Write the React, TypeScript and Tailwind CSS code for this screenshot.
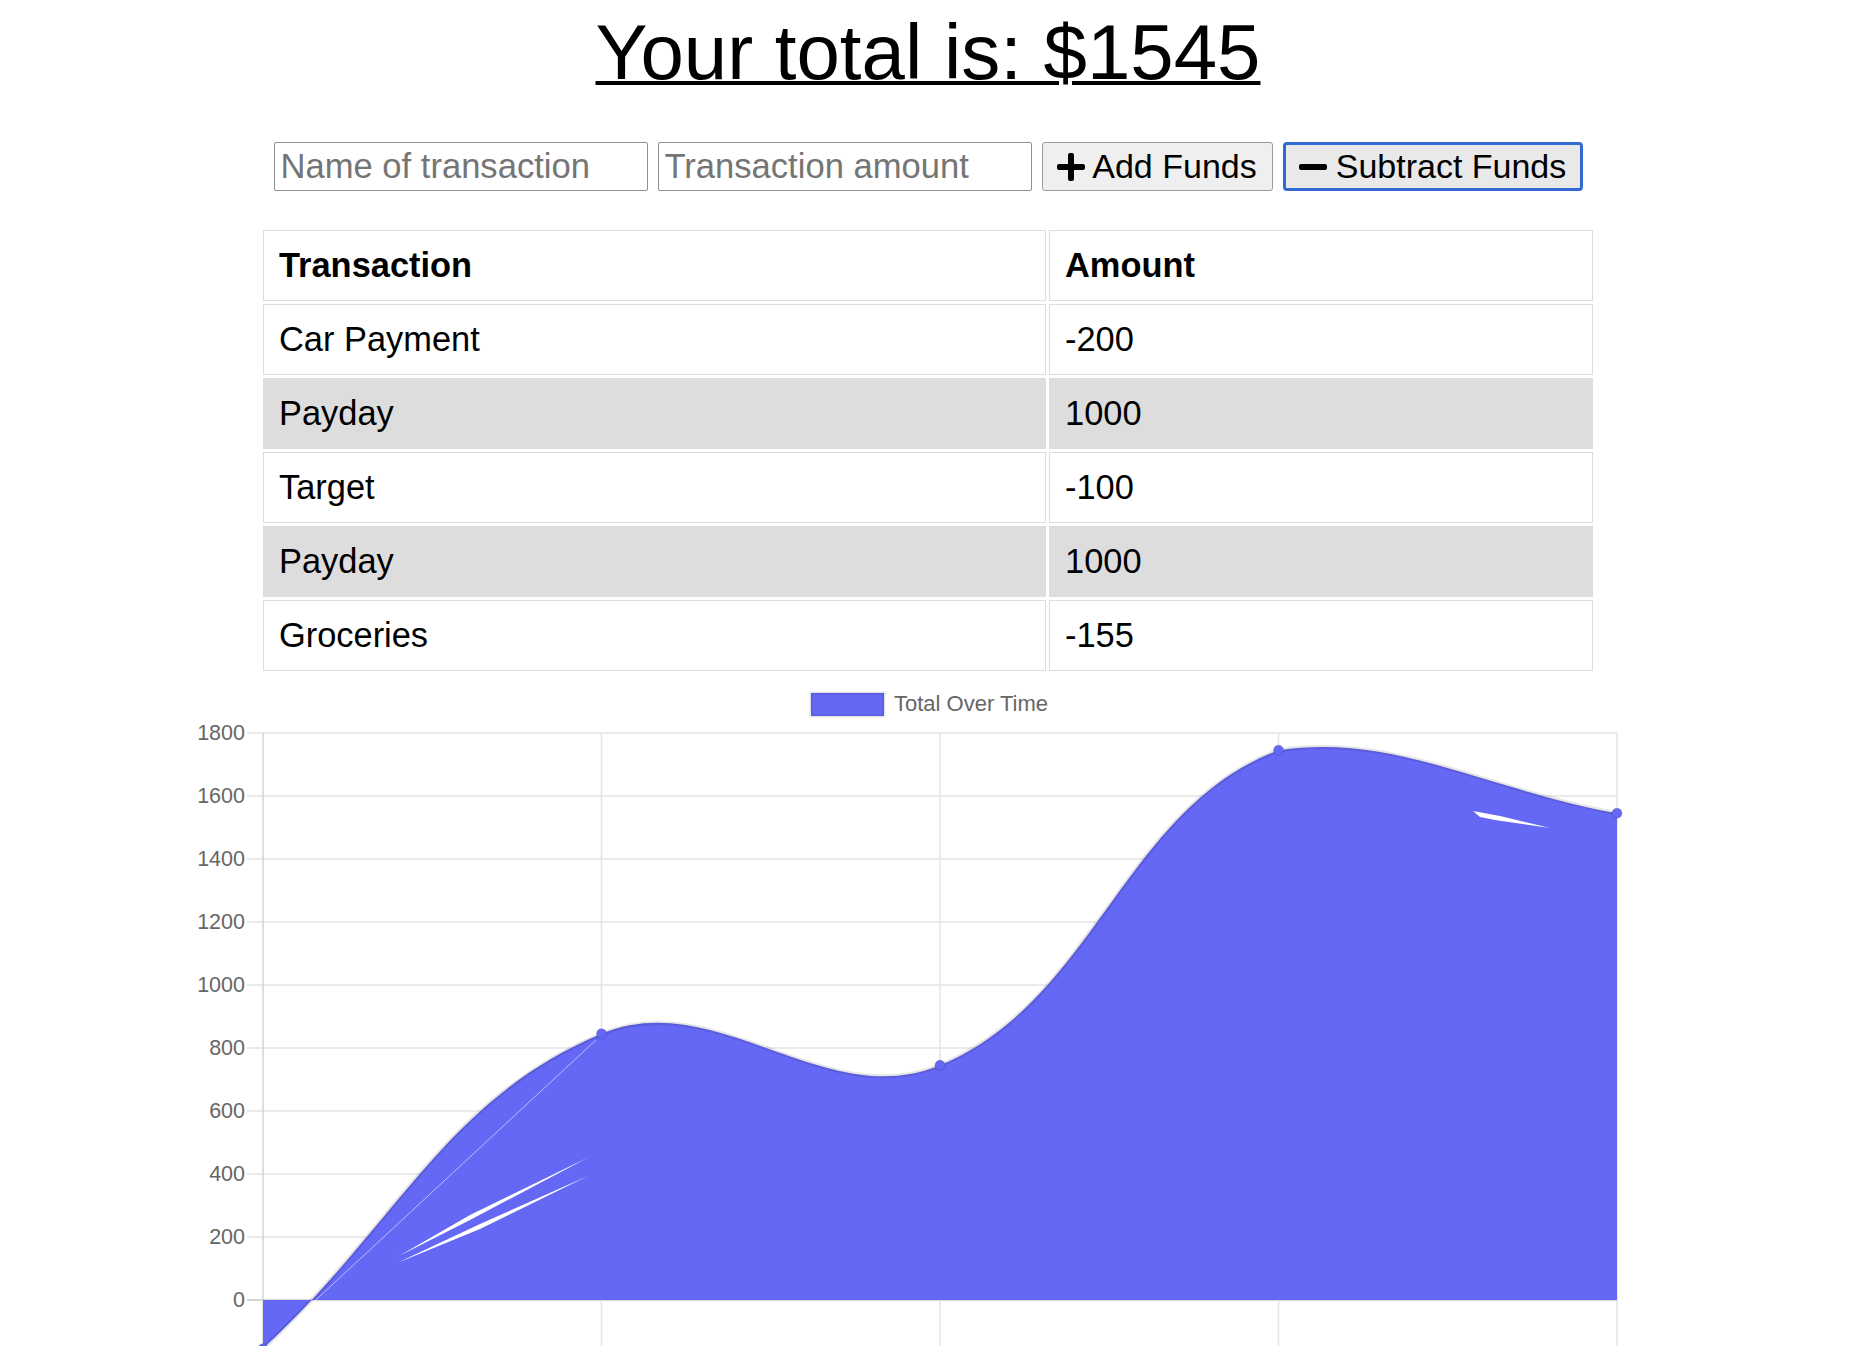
import React from "react";

type Row = { name: string; amount: number };

const rows: Row[] = [
  { name: "Car Payment", amount: -200 },
  { name: "Payday", amount: 1000 },
  { name: "Target", amount: -100 },
  { name: "Payday", amount: 1000 },
  { name: "Groceries", amount: -155 },
];

// chart geometry, in page pixels
const xs = [263, 601.5, 940, 1278.5, 1617];
const data = [-155, 845, 745, 1745, 1545];
const yOf = (v: number) => 1300 - v * 0.315;
const ticks = [0, 200, 400, 600, 800, 1000, 1200, 1400, 1600, 1800];
const fillColor = "#6567f5";

type Pt = { x: number; y: number };

function controlPoints(pts: Pt[], t: number, top: number, bottom: number) {
  const clamp = (y: number) => Math.max(top, Math.min(bottom, y));
  return pts.map((cur, i) => {
    const prev = pts[i - 1] || cur;
    const next = pts[i + 1] || cur;
    const d01 = Math.hypot(cur.x - prev.x, cur.y - prev.y);
    const d12 = Math.hypot(next.x - cur.x, next.y - cur.y);
    const s01 = d01 + d12 ? d01 / (d01 + d12) : 0;
    const s12 = d01 + d12 ? d12 / (d01 + d12) : 0;
    const fa = t * s01;
    const fb = t * s12;
    return {
      before: { x: cur.x - fa * (next.x - prev.x), y: clamp(cur.y - fa * (next.y - prev.y)) },
      after: { x: cur.x + fb * (next.x - prev.x), y: clamp(cur.y + fb * (next.y - prev.y)) },
    };
  });
}

function curvePath() {
  const pts = xs.map((x, i) => ({ x, y: yOf(data[i]) }));
  const cps = controlPoints(pts, 0.4, 733, 1420);
  let d = `M${pts[0].x},${pts[0].y}`;
  for (let i = 1; i < pts.length; i++) {
    const a = cps[i - 1].after;
    const b = cps[i].before;
    d += ` C${a.x},${a.y} ${b.x},${b.y} ${pts[i].x},${pts[i].y}`;
  }
  return d;
}

function PlusIcon() {
  return (
    <svg viewBox="0 0 448 512" className="h-[32px] w-[28px]" fill="currentColor">
      <path d="M416 208H272V64c0-17.67-14.330-32-32-32h-32c-17.67 0-32 14.33-32 32v144H32c-17.67 0-32 14.33-32 32v32c0 17.67 14.33 32 32 32h144v144c0 17.67 14.33 32 32 32h32c17.67 0 32-14.33 32-32V304h144c17.67 0 32-14.33 32-32v-32c0-17.67-14.33-32-32-32z" />
    </svg>
  );
}

function MinusIcon() {
  return (
    <svg viewBox="0 0 448 512" className="h-[32px] w-[28px]" fill="currentColor">
      <path d="M416 208H32c-17.67 0-32 14.33-32 32v32c0 17.67 14.33 32 32 32h384c17.67 0 32-14.33 32-32v-32c0-17.67-14.33-32-32-32z" />
    </svg>
  );
}

function Chart() {
  const line = curvePath();
  const area = `${line} L1617,1300 L263,1300 Z`;
  return (
    <svg width={1856} height={672} viewBox="0 674 1856 672" className="block">
      {/* legend */}
      <rect x={811} y={693} width={73} height={23} fill={fillColor} stroke="rgba(0,0,0,0.1)" strokeWidth={3} />
      <text x={894} y={705} fontSize={22} fill="#666" dominantBaseline="middle" fontFamily="'Liberation Sans', Arial, sans-serif">
        Total Over Time
      </text>

      {/* grid */}
      {ticks.map((v) => (
        <line key={v} x1={247} x2={1617} y1={yOf(v)} y2={yOf(v)} stroke={v === 0 ? "#c9c9c9" : "#e3e3e3"} strokeWidth={1.5} />
      ))}
      {xs.map((x, i) => (
        <line key={x} x1={x} x2={x} y1={733} y2={1346} stroke={i === 0 ? "#d4d4d4" : "#e3e3e3"} strokeWidth={1.5} />
      ))}
      {ticks.map((v) => (
        <text key={v} x={245} y={yOf(v) + 1} fontSize={21.5} fill="#666" textAnchor="end" dominantBaseline="middle" fontFamily="'Liberation Sans', Arial, sans-serif">
          {v}
        </text>
      ))}

      {/* area + line */}
      <path d={area} fill={fillColor} />
      <path d={line} fill="none" stroke="rgba(0,0,0,0.1)" strokeWidth={4} />

      {/* render artifacts in the fill */}
      <line x1={263} y1={1349} x2={596} y2={1040} stroke="white" strokeOpacity={0.55} strokeWidth={1} />
      <polygon points="399,1256 470,1215 589,1157 470,1220" fill="white" />
      <polygon points="397,1263 480,1224 588,1176 480,1229" fill="white" />
      <polygon points="1473,811 1500,816 1550,828 1495,820 1480,817" fill="white" />

      {/* points */}
      {xs.map((x, i) => (
        <circle key={x} cx={x} cy={yOf(data[i])} r={5} fill={fillColor} stroke="rgba(0,0,0,0.1)" strokeWidth={1.5} />
      ))}
    </svg>
  );
}

export default function App() {
  return (
    <div className="h-[1346px] w-[1856px] overflow-hidden bg-white text-black font-['Liberation_Sans',Arial,sans-serif]">
      <h1 className="pt-[8px] text-center text-[78px] leading-[88px] font-normal underline decoration-[4px]">
        Your total is: $1545
      </h1>

      <div className="mt-[46px] flex justify-center gap-[10px] text-[34px]">
        <input
          type="text"
          placeholder="Name of transaction"
          className="h-[49px] w-[374px] rounded-[2px] border border-[#8f8f8f] px-[6px] text-[34.6px] placeholder-[#757575] outline-none"
        />
        <input
          type="number"
          placeholder="Transaction amount"
          className="h-[49px] w-[374px] rounded-[2px] border border-[#8f8f8f] px-[6px] text-[34.6px] placeholder-[#757575] outline-none"
        />
        <button className="flex h-[49px] w-[231px] items-center justify-center gap-[7px] rounded-[3px] border border-[#9a9a9a] bg-[#efefef]">
          <PlusIcon />
          <span>Add Funds</span>
        </button>
        <button className="flex h-[49px] w-[300px] items-center justify-center gap-[9px] rounded-[4px] border-[3px] border-[#3369d3] bg-[#e9e9e9]">
          <MinusIcon />
          <span>Subtract Funds</span>
        </button>
      </div>

      <div className="mt-[36px] flex justify-center">
        <table className="w-[1336px] table-fixed border-separate border-spacing-[3px] text-left text-[34.4px]">
          <colgroup>
            <col className="w-[783px]" />
            <col />
          </colgroup>
          <thead>
            <tr>
              <th className="border border-[#dddddd] px-[15px] py-[15px] leading-[39px] font-bold">Transaction</th>
              <th className="border border-[#dddddd] px-[15px] py-[15px] leading-[39px] font-bold">Amount</th>
            </tr>
          </thead>
          <tbody>
            {rows.map((r, i) => (
              <tr key={i}>
                <td className={`border border-[#dddddd] px-[15px] py-[15px] leading-[39px] ${i % 2 === 1 ? "bg-[#dddddd]" : ""}`}>
                  {r.name}
                </td>
                <td className={`border border-[#dddddd] px-[15px] py-[15px] leading-[39px] ${i % 2 === 1 ? "bg-[#dddddd]" : ""}`}>
                  {r.amount}
                </td>
              </tr>
            ))}
          </tbody>
        </table>
      </div>

      <Chart />
    </div>
  );
}
